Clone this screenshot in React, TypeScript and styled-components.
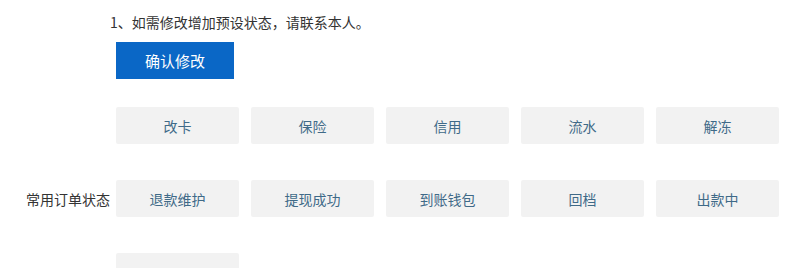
import React from 'react';
import styled, { createGlobalStyle } from 'styled-components';

const GlobalStyle = createGlobalStyle`
	html, body {
		margin: 0;
		padding: 0;
		background: #ffffff;
	}
	body {
		font-family: 'Noto Sans CJK SC', 'Liberation Sans', sans-serif;
		font-size: 14px;
		color: #333333;
	}
`;

const presets = [
	['改卡', '保险', '信用', '流水', '解冻'],
	['退款维护', '提现成功', '到账钱包', '回档', '出款中'],
	[''],
];

export default function App() {
	return (
		<>
			<GlobalStyle />
			<Page>
				<Block>
					<Spacer />
					<Content>
						<Notice>1、如需修改增加预设状态，请联系本人。</Notice>
						<ConfirmButton>确认修改</ConfirmButton>
					</Content>
				</Block>
				<FormRow>
					<Label>常用订单状态</Label>
					<TagGrid>
						{presets.flat().map((name, i) => (
							<Tag key={i}>{name}</Tag>
						))}
					</TagGrid>
				</FormRow>
			</Page>
		</>
	);
}

const Page = styled.div`
	width: 800px;
	height: 268px;
	overflow: hidden;
	padding-top: 12px;
	box-sizing: border-box;
`;

const Block = styled.div`
	display: flex;
`;

const Spacer = styled.div`
	width: 110px;
	flex-shrink: 0;
`;

const Content = styled.div`
	display: flex;
	flex-direction: column;
	align-items: flex-start;
`;

const Notice = styled.div`
	line-height: 20px;
	color: #333333;
`;

const ConfirmButton = styled.button`
	margin: 10px 0 0 6px;
	width: 118px;
	height: 37px;
	border: none;
	background-color: #0a67c6;
	color: #ffffff;
	font-family: inherit;
	font-size: 15px;
	padding: 0;
	cursor: pointer;
`;

const FormRow = styled.div`
	display: flex;
	align-items: center;
	margin-top: 28px;
`;

const Label = styled.div`
	width: 110px;
	flex-shrink: 0;
	box-sizing: border-box;
	padding-left: 26px;
	color: #333333;
	white-space: nowrap;
`;

const TagGrid = styled.div`
	display: grid;
	grid-template-columns: repeat(5, 123px);
	grid-auto-rows: 37px;
	column-gap: 12px;
	row-gap: 36px;
	margin-left: 6px;
`;

const Tag = styled.div`
	display: flex;
	align-items: center;
	justify-content: center;
	background-color: #f2f2f2;
	border-radius: 2px;
	color: #3f6a88;
	font-size: 14px;
`;
